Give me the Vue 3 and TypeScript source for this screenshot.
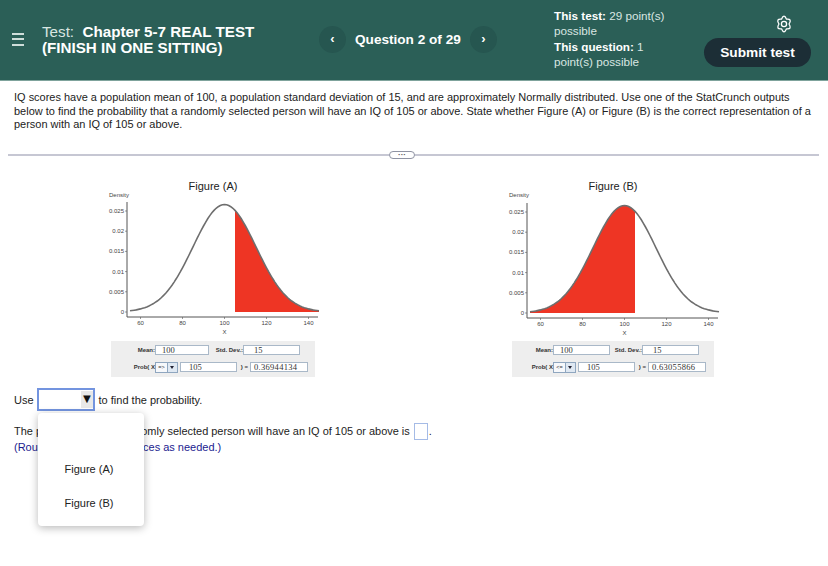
<script setup lang="ts">
import { computed } from 'vue'

// normal density, same scale for both StatCrunch plots
const pdf = (x: number) => Math.exp(-((x - 100) ** 2) / 450) / (15 * Math.sqrt(2 * Math.PI))
const px = (x: number) => 30 + (x - 55) * 2.1
const py = (y: number, base: number) => base - y * 4040

const line = (from: number, to: number, base: number) => {
  const pts: string[] = []
  for (let x = from; x <= to; x += 1) pts.push(`${px(x).toFixed(1)},${py(pdf(x), base).toFixed(1)}`)
  return pts
}

const xTicks = [60, 80, 100, 120, 140]
const yTicks = [
  { v: 0, label: '0' },
  { v: 0.005, label: '0.005' },
  { v: 0.01, label: '0.01' },
  { v: 0.015, label: '0.015' },
  { v: 0.02, label: '0.02' },
  { v: 0.025, label: '0.025' },
]

const figures = computed(() => [
  { id: 'a', title: 'Figure (A)', from: 105, to: 145, base: 122, op: '=>', result: '0.36944134' },
  { id: 'b', title: 'Figure (B)', from: 55, to: 105, base: 123, op: '<=', result: '0.63055866' },
].map((f) => ({
  ...f,
  curve: line(55, 145, f.base).join(' '),
  shade: `${px(f.from)},${py(0, f.base)} ${line(f.from, f.to, f.base).join(' ')} ${px(f.to)},${py(0, f.base)}`,
})))

// six round lobes, slightly taller than wide
const gearPath = computed(() => {
  const point = (deg: number, r: number) => {
    const a = (deg * Math.PI) / 180
    return `${(9 + Math.cos(a) * r * 0.9).toFixed(2)} ${(9 + Math.sin(a) * r).toFixed(2)}`
  }
  let d = `M${point(-120, 5.6)}`
  for (let i = 0; i < 6; i++) {
    d += ` Q${point(-90 + i * 60, 10.8)} ${point(-60 + i * 60, 5.6)}`
  }
  return d + 'Z'
})
</script>

<template>
  <div class="page">
    <header class="topbar">
      <div class="burger"><span></span><span></span><span></span></div>
      <div class="title"><span class="thin">Test:</span>&nbsp; Chapter 5-7 REAL TEST<br />(FINISH IN ONE SITTING)</div>
      <div class="nav">
        <button class="round">‹</button>
        <span class="qnum">Question 2 of 29</span>
        <button class="round">›</button>
      </div>
      <div class="points">
        <b>This test:</b> 29 point(s)<br />possible<br />
        <b>This question:</b> 1<br />point(s) possible
      </div>
      <div class="actions">
        <svg class="gear" width="18" height="18" viewBox="0 0 18 18" fill="none" stroke="#fff" stroke-width="1.3" stroke-linejoin="round">
          <path :d="gearPath" />
          <circle cx="9" cy="9" r="2.6" />
        </svg>
        <button class="submit">Submit test</button>
      </div>
    </header>

    <main class="content">
      <p class="intro">
        IQ scores have a population mean of 100, a population standard deviation of 15, and are approximately Normally distributed. Use one of the StatCrunch outputs below to find the probability that a randomly selected person will have an IQ of 105 or above. State whether Figure (A) or Figure (B) is the correct representation of a person with an IQ of 105 or above.
      </p>

      <div class="divider"><i class="left"></i><span class="pill">···</span><i></i></div>

      <div class="figures">
        <section v-for="f in figures" :key="f.id" class="figure" :class="'figure-' + f.id">
          <h3>{{ f.title }}</h3>
          <svg class="plot" width="230" height="145" viewBox="0 0 230 145">
            <text x="9" y="7" class="lbl">Density</text>
            <polygon :points="f.shade" fill="#ee3524" />
            <polyline :points="f.curve" fill="none" stroke="#6e6e6e" stroke-width="1.6" />
            <line x1="27" :y1="f.base - 110" x2="27" :y2="f.base + 5" stroke="#555" stroke-width="1" />
            <line x1="27" :y1="f.base + 5" x2="218" :y2="f.base + 5" stroke="#555" stroke-width="1" />
            <g v-for="t in yTicks" :key="t.v">
              <line x1="25" :y1="py(t.v, f.base)" x2="27" :y2="py(t.v, f.base)" stroke="#555" stroke-width="0.6" />
              <text x="24" :y="py(t.v, f.base) + 2" text-anchor="end" class="lbl">{{ t.label }}</text>
            </g>
            <g v-for="t in xTicks" :key="t">
              <line :x1="px(t)" :y1="f.base + 5" :x2="px(t)" :y2="f.base + 7" stroke="#555" stroke-width="0.6" />
              <text :x="px(t)" :y="f.base + 13" text-anchor="middle" class="lbl">{{ t }}</text>
            </g>
            <text :x="px(100)" :y="f.base + 22" text-anchor="middle" class="lbl">X</text>
          </svg>
          <div class="calc">
            <div class="calc-row">
              <label>Mean:</label>
              <span class="box mean">100</span>
              <label class="std">Std. Dev.:</label>
              <span class="box sd">15</span>
            </div>
            <div class="calc-row">
              <label>Prob( X</label>
              <span class="op">{{ f.op }}</span><span class="op-btn"></span>
              <span class="box mid">105</span>
              <label class="eq">) =</label>
              <span class="box res">{{ f.result }}</span>
            </div>
          </div>
        </section>
      </div>

      <div class="answer">
        <div class="use-row">
          <span>Use</span>
          <div class="select">
            <span class="select-arrow">▼</span>
            <ul class="menu">
              <li></li>
              <li>Figure (A)</li>
              <li>Figure (B)</li>
            </ul>
          </div>
          <span>to find the probability.</span>
        </div>
        <div class="prob-row">
          <span>The probability that a randomly selected person will have an IQ of 105 or above is</span>
          <span class="blank"></span>
          <span>.</span>
        </div>
        <div class="hint">(Round to four decimal places as needed.)</div>
      </div>
    </main>
  </div>
</template>

<style>
body {
  background: #fff;
}
</style>

<style scoped>
.page {
  width: 828px;
  height: 566px;
  overflow: hidden;
  font-family: "Liberation Sans", Arial, sans-serif;
  color: #222;
}

.topbar {
  height: 81px;
  box-sizing: border-box;
  background: #2b5f57;
  border-bottom: 1px solid #7fa39c;
  display: flex;
  align-items: center;
  color: #fff;
}

.burger {
  width: 12px;
  margin-left: 12px;
  margin-top: -2px;
  display: flex;
  flex-direction: column;
  gap: 3.5px;
}

.burger span {
  height: 2px;
  background: #cfdeda;
}

.title {
  width: 236px;
  margin-left: 18px;
  margin-top: -1px;
  font-size: 15.2px;
  line-height: 16px;
  font-weight: 700;
}

.thin {
  font-weight: 400;
  color: #d9e6e2;
}

.nav {
  display: flex;
  align-items: center;
  margin-top: -1px;
  margin-left: 41px;
}

.round {
  width: 27px;
  height: 27px;
  border: 0;
  padding: 0 0 2px;
  border-radius: 50%;
  background: #265650;
  color: #fff;
  font: 700 13px "Liberation Sans", Arial, sans-serif;
}

.qnum {
  width: 124px;
  box-sizing: border-box;
  padding-left: 9px;
  font-size: 13.6px;
  font-weight: 700;
  white-space: nowrap;
}

.points {
  width: 150px;
  margin-left: 57px;
  margin-top: -3px;
  font-size: 11.7px;
  line-height: 15.3px;
  color: #d9e6e2;
}

.points b {
  color: #fff;
}

.actions {
  display: flex;
  flex-direction: column;
  align-items: center;
  width: 107px;
  margin-top: 3px;
  gap: 5px;
}

.gear {
  margin-left: 53px;
  margin-top: -1px;
}

.submit {
  width: 107px;
  height: 29px;
  border: 0;
  border-radius: 15px;
  background: #1c2e36;
  color: #fff;
  font: 700 13.7px "Liberation Sans", Arial, sans-serif;
}

.content {
  padding-top: 10px;
}

.intro {
  margin: 0;
  padding: 0 14px;
  font-size: 10.98px;
  line-height: 13.5px;
  width: 800px;
}

.divider {
  display: flex;
  align-items: center;
  margin: 19px 9px 0 8px;
  height: 8px;
}

.divider i {
  flex: 1;
  height: 2px;
  background: #c6c7d3;
}

.divider .left {
  flex: none;
  width: 381px;
}

.pill {
  width: 26px;
  height: 8px;
  box-sizing: border-box;
  border: 1px solid #8f93a3;
  border-radius: 4px;
  font-size: 8px;
  line-height: 5px;
  text-align: center;
  font-weight: 700;
  color: #555;
}

.figures {
  display: flex;
  padding-left: 100px;
  gap: 170px;
  margin-top: 20px;
}

.figure {
  width: 230px;
}

.figure h3 {
  margin: 0;
  width: 226px;
  height: 11.5px;
  font-size: 11px;
  font-weight: 400;
  line-height: 15px;
  text-align: center;
}

.plot {
  display: block;
}

.lbl {
  font-size: 6px;
  fill: #444;
  font-family: "Liberation Sans", Arial, sans-serif;
}

.calc {
  box-sizing: border-box;
  height: 36px;
  margin-top: 6px;
  padding-bottom: 1px;
  background: #eeeeee;
  display: flex;
  flex-direction: column;
  justify-content: center;
  gap: 7px;
}

.figure-a .calc {
  width: 204px;
  margin-left: 11px;
  padding-left: 20px;
}

.figure-b .calc {
  width: 202px;
  margin-left: 12px;
  padding-left: 17px;
}

.calc-row {
  display: flex;
  align-items: center;
  height: 10px;
  font-size: 6px;
  font-weight: 700;
  color: #333;
}

.calc-row label {
  width: 24px;
  text-align: right;
  white-space: nowrap;
}

.calc-row .std {
  width: 34px;
}

.figure-b .std {
  width: 32px;
}

.calc-row .eq {
  width: 11px;
}

.box {
  box-sizing: border-box;
  height: 10px;
  background: #fff;
  border: 1px solid #a9b8c8;
  font: 400 8.5px/8px "Liberation Serif", serif;
  color: #333;
}

.mean {
  width: 54px;
  padding-left: 6px;
}

.figure-b .mean {
  width: 57px;
}

.sd {
  width: 57px;
  padding-left: 10px;
}

.mid {
  width: 57px;
  margin-left: 2px;
  padding-left: 8px;
}

.res {
  width: 58px;
  margin-left: 2px;
  padding-left: 3px;
  letter-spacing: 0.3px;
}

.op,
.op-btn {
  box-sizing: border-box;
  height: 11px;
  background: #dfe8f2;
  border: 1px solid #8fa6bf;
  font: 400 5.5px/9px "Liberation Sans", sans-serif;
  text-align: center;
}

.op {
  width: 13px;
  background: #f6f8fb;
}

.op-btn {
  width: 10px;
  border-left: 0;
  position: relative;
}

.op-btn::after {
  content: "";
  position: absolute;
  left: 2px;
  top: 3px;
  border: 2.5px solid transparent;
  border-top: 3px solid #223;
}

.answer {
  padding: 11px 14px 0;
  font-size: 11px;
  line-height: 14px;
}

.use-row {
  display: flex;
  align-items: center;
  height: 23px;
  gap: 4px;
}

.select {
  position: relative;
  width: 58px;
  height: 23px;
  box-sizing: border-box;
  border: 2px solid #7394df;
  margin-left: -1px;
}

.select-arrow {
  position: absolute;
  right: 0;
  top: 1px;
  width: 12px;
  height: 17px;
  background: #e8e8e8;
  font-size: 13px;
  line-height: 15px;
  text-align: center;
  color: #111;
}

.menu {
  position: absolute;
  left: -1px;
  top: 23px;
  z-index: 5;
  width: 106px;
  height: 113px;
  box-sizing: border-box;
  margin: 0;
  padding: 5px 0;
  list-style: none;
  background: #fff;
  border-radius: 4px;
  box-shadow: 0 2px 8px rgba(0, 0, 0, 0.28);
}

.menu li {
  height: 34px;
  line-height: 34px;
  padding-left: 27px;
  font-size: 11px;
}

.prob-row {
  margin-top: 12px;
  height: 16px;
  display: flex;
  align-items: center;
  white-space: nowrap;
  font-size: 10.96px;
}

.blank {
  width: 14px;
  height: 17px;
  flex: none;
  box-sizing: border-box;
  border: 1px solid #a5bbe6;
  margin-left: 4px;
  margin-right: 1px;
}

.hint {
  color: #1b1b8f;
  margin-top: 1px;
}
</style>
